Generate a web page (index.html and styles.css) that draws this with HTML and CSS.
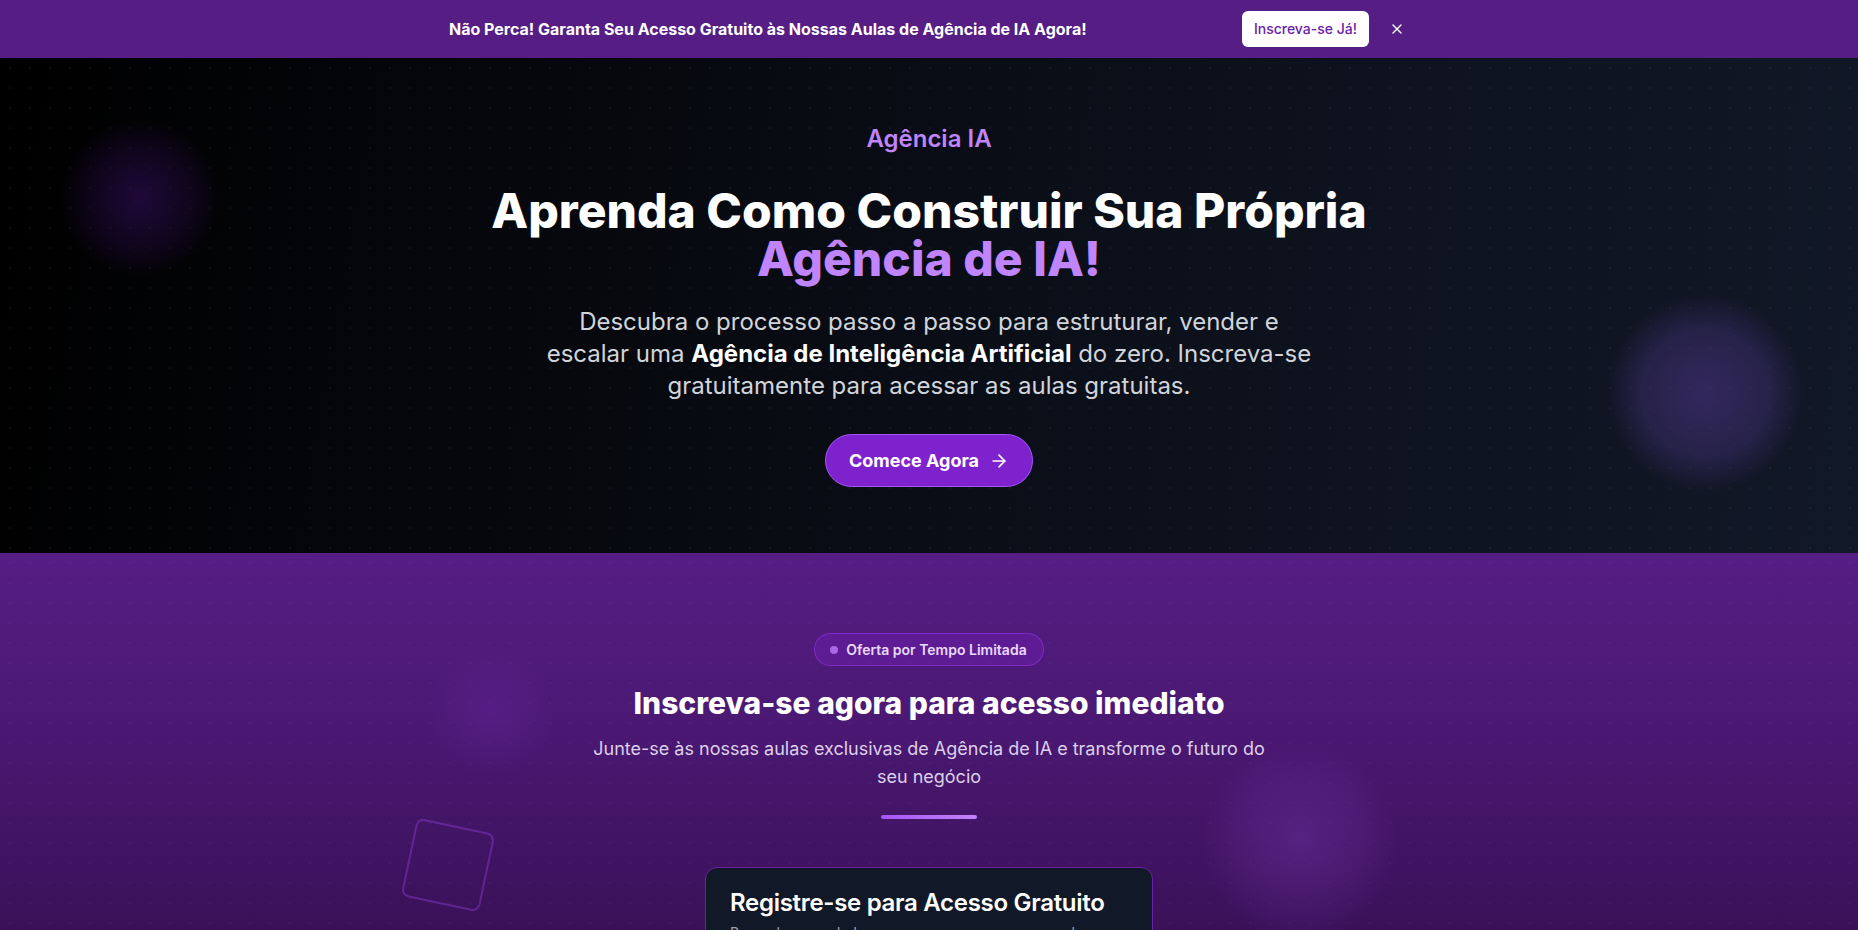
FILE: index.html
```html
<!DOCTYPE html>
<html lang="pt-BR">
<head>
<meta charset="utf-8">
<title>Agência IA</title>
<link rel="stylesheet" href="styles.css">
</head>
<body>
<div class="promo">
  <div class="promo-inner">
    <p class="promo-text">Não Perca! Garanta Seu Acesso Gratuito às Nossas Aulas de Agência de IA Agora!</p>
    <div class="promo-actions">
      <a class="promo-btn" href="#registro">Inscreva-se Já!</a>
      <button class="promo-close" aria-label="Fechar">
        <svg width="16" height="16" viewBox="0 0 24 24" fill="none" stroke="currentColor" stroke-width="2" stroke-linecap="round" stroke-linejoin="round"><path d="M18 6 6 18"/><path d="m6 6 12 12"/></svg>
      </button>
    </div>
  </div>
</div>

<section class="hero">
  <div class="blob blob-hero-left"></div>
  <div class="blob blob-hero-right"></div>
  <div class="hero-content">
    <p class="hero-label">Agência IA</p>
    <h1 class="hero-title">Aprenda Como Construir Sua Própria<br><span class="accent">Agência de IA!</span></h1>
    <p class="hero-text">Descubra o processo passo a passo para estruturar, vender e escalar uma <strong>Agência de Inteligência Artificial</strong> do zero. Inscreva-se gratuitamente para acessar as aulas gratuitas.</p>
    <a class="cta" href="#registro">Comece Agora
      <svg width="20" height="20" viewBox="0 0 24 24" fill="none" stroke="currentColor" stroke-width="2" stroke-linecap="round" stroke-linejoin="round"><path d="M5 12h14"/><path d="m12 5 7 7-7 7"/></svg>
    </a>
  </div>
</section>

<section class="signup" id="registro">
  <div class="blob blob-sign-left"></div>
  <div class="blob blob-sign-right"></div>
  <div class="deco-square"></div>
  <div class="signup-content">
    <span class="badge"><span class="badge-dot"></span>Oferta por Tempo Limitada</span>
    <h2 class="signup-title">Inscreva-se agora para acesso imediato</h2>
    <p class="signup-text">Junte-se às nossas aulas exclusivas de Agência de IA e transforme o futuro do seu negócio</p>
    <div class="divider"></div>
    <div class="card">
      <h3 class="card-title">Registre-se para Acesso Gratuito</h3>
      <p class="card-sub">Preencha seus dados para começar com nossas aulas</p>
      <form class="form">
        <label class="field"><span>Nome</span><input type="text" placeholder="Seu nome completo"></label>
        <label class="field"><span>Email</span><input type="email" placeholder="seu@email.com"></label>
        <label class="field"><span>WhatsApp</span><input type="tel" placeholder="(00) 00000-0000"></label>
        <button type="button" class="submit">Quero Acesso Gratuito</button>
      </form>
    </div>
  </div>
</section>
</body>
</html>
```

FILE: styles.css
```css
* { box-sizing: border-box; }
html, body { margin: 0; padding: 0; }
body {
  font-family: Inter, "Noto Sans", "Liberation Sans", sans-serif;
  background: #2a0c40;
  color: #fff;
}

/* promo bar */
.promo {
  background: #561d84;
  height: 58px;
  display: flex;
  align-items: center;
}
.promo-inner {
  width: 960px;
  margin: 0 auto;
  display: flex;
  align-items: center;
  justify-content: space-between;
}
.promo-text {
  margin: 0;
  font-size: 16px;
  font-weight: 700;
  letter-spacing: 0;
  white-space: nowrap;
}
.promo-actions {
  display: flex;
  align-items: center;
  gap: 16px;
}
.promo-btn {
  background: #fff;
  color: #6b21a8;
  text-decoration: none;
  font-size: 14px;
  font-weight: 500;
  line-height: 20px;
  padding: 8px 12px;
  border-radius: 6px;
  white-space: nowrap;
}
.promo-close {
  background: none;
  border: 0;
  color: #fff;
  padding: 4px;
  display: flex;
  cursor: pointer;
}

/* hero */
.hero {
  position: relative;
  overflow: hidden;
  background-color: #05060b;
  background-image:
    radial-gradient(circle, rgba(255,255,255,0.045) 1px, transparent 1.5px),
    linear-gradient(100deg, #000 0%, #07090f 35%, #0c111c 65%, #111827 100%);
  background-size: 20px 20px, 100% 100%;
  padding: 65px 0 66px;
}
.hero-content {
  position: relative;
  display: flex;
  flex-direction: column;
  align-items: center;
  text-align: center;
}
.hero-label {
  margin: 0;
  color: #c084fc;
  font-size: 24px;
  line-height: 32px;
  font-weight: 600;
}
.hero-title {
  margin: 32px 0 0;
  font-size: 48px;
  line-height: 48px;
  font-weight: 800;
  letter-spacing: 0;
}
.accent { color: #c084fc; }
.hero-text {
  margin: 23px 0 0;
  max-width: 768px;
  font-size: 24px;
  line-height: 32px;
  color: #d1d5db;
}
.hero-text strong { color: #fff; font-weight: 700; }
.cta {
  margin-top: 32px;
  display: inline-flex;
  align-items: center;
  gap: 10px;
  height: 53px;
  padding: 0 23px;
  border-radius: 9999px;
  background: #7e22ce;
  border: 1px solid #a855f7;
  color: #fff;
  font-size: 18px;
  font-weight: 700;
  text-decoration: none;
}

/* decorative blobs */
.blob {
  position: absolute;
  border-radius: 50%;
  pointer-events: none;
}
.blob-hero-left {
  left: 60px; top: 60px;
  width: 160px; height: 160px;
  background: radial-gradient(circle, rgba(60,15,110,0.5) 0%, rgba(60,15,110,0.22) 45%, transparent 70%);
}
.blob-hero-right {
  left: 1605px; top: 235px;
  width: 200px; height: 200px;
  background: radial-gradient(circle, rgba(80,55,140,0.55) 0%, rgba(80,55,140,0.35) 45%, transparent 70%);
}

/* signup */
.signup {
  position: relative;
  overflow: hidden;
  background-color: #3a1158;
  background-image:
    radial-gradient(circle, rgba(255,255,255,0.03) 1px, transparent 1.5px),
    linear-gradient(to bottom, #561d84 0px, #4a1872 180px, #3a1158 380px, #2a0c40 900px);
  background-size: 20px 20px, 100% 100%;
  padding: 80px 0 80px;
}
.blob-sign-left {
  left: 427px; top: 93px;
  width: 130px; height: 130px;
  background: radial-gradient(circle, rgba(110,40,170,0.3) 0%, rgba(110,40,170,0.12) 45%, transparent 70%);
}
.blob-sign-right {
  left: 1200px; top: 188px;
  width: 200px; height: 200px;
  background: radial-gradient(circle, rgba(120,60,180,0.35) 0%, rgba(120,60,180,0.16) 45%, transparent 70%);
}
.deco-square {
  position: absolute;
  left: 408px; top: 272px;
  width: 80px; height: 80px;
  border: 2px solid rgba(140,60,210,0.45);
  border-radius: 8px;
  transform: rotate(12deg);
}
.signup-content {
  position: relative;
  display: flex;
  flex-direction: column;
  align-items: center;
  text-align: center;
}
.badge {
  display: inline-flex;
  align-items: center;
  gap: 8px;
  height: 33px;
  padding: 0 16px 0 15px;
  border-radius: 9999px;
  background: rgba(126,34,206,0.3);
  border: 1px solid rgba(147,51,234,0.6);
  color: #ead9fb;
  font-size: 14px;
  font-weight: 600;
}
.badge-dot {
  width: 8px; height: 8px;
  border-radius: 50%;
  background: #a968e6;
}
.signup-title {
  margin: 19px 0 0;
  font-size: 30px;
  line-height: 36px;
  font-weight: 800;
  letter-spacing: 0;
}
.signup-text {
  margin: 14px 0 0;
  max-width: 672px;
  font-size: 18px;
  line-height: 28px;
  color: #ddd0ea;
}
.divider {
  margin-top: 24px;
  width: 96px;
  height: 4px;
  border-radius: 2px;
  background: linear-gradient(to right, #a855f7, #c084fc);
}
.card {
  margin-top: 48px;
  width: 448px;
  background: #111827;
  border: 1px solid #6b21a8;
  border-radius: 12px;
  padding: 19px 24px 24px;
  text-align: left;
}
.card-title {
  margin: 0;
  font-size: 24px;
  line-height: 32px;
  font-weight: 600;
  letter-spacing: -0.3px;
}
.card-sub {
  margin: 4px 0 0;
  font-size: 14px;
  line-height: 20px;
  color: #9ca3af;
}
.form {
  margin-top: 24px;
  display: flex;
  flex-direction: column;
  gap: 16px;
}
.field {
  display: flex;
  flex-direction: column;
  gap: 6px;
  font-size: 14px;
  color: #e5e7eb;
}
.field input {
  height: 40px;
  background: #1f2937;
  border: 1px solid #374151;
  border-radius: 6px;
  padding: 0 12px;
  color: #fff;
  font: inherit;
}
.submit {
  height: 44px;
  border: 0;
  border-radius: 6px;
  background: #7e22ce;
  color: #fff;
  font: inherit;
  font-weight: 600;
}
```
